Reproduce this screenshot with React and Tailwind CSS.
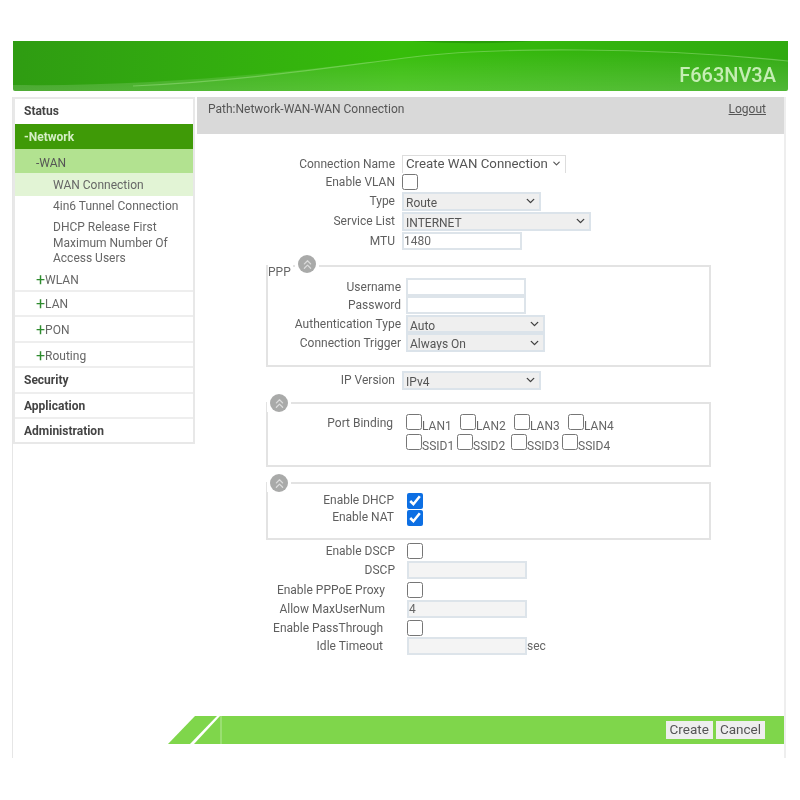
import { ChevronDown, ChevronsUp } from 'lucide-react';

const subItems = [
  { label: 'WLAN', row: 'h-[23px] border-b-2' },
  { label: 'LAN', row: 'h-[25px] border-b-2 pt-[1px]' },
  { label: 'PON', row: 'h-[26px] border-b-2 pt-[2px]' },
  { label: 'Routing', row: 'h-[25px] border-b-2 pt-[2px]' },
];

function Collapse({ className = 'left-[-1px] top-[-10px]' }) {
  return (
    <span className={`absolute bg-white px-[3px] ${className}`}>
      <span className="flex h-[18px] w-[18px] items-center justify-center rounded-full bg-[#a9aaa9]">
        <ChevronsUp className="h-[15px] w-[15px] text-[#dcdcdc]" strokeWidth={2} />
      </span>
    </span>
  );
}

function Select({ value, width }) {
  return (
    <div className={`relative ${width}`}>
      <select
        defaultValue={value}
        className="block h-full w-full appearance-none border-2 border-[#dbe3ea] bg-[#efefef] pl-[2px] text-[12px] text-[#555] outline-none"
      >
        <option>{value}</option>
      </select>
      <ChevronDown className="pointer-events-none absolute right-[4px] top-1/2 h-[13px] w-[13px] -translate-y-1/2 text-[#444]" strokeWidth={2.5} />
    </div>
  );
}

function Input({ value = '', disabled = false, className = 'h-[18px]' }) {
  return (
    <input
      type="text"
      defaultValue={value}
      disabled={disabled}
      className={`${className} w-[120px] border-2 border-[#dde4ea] text-[12px] text-[#666] outline-none ${disabled ? 'bg-[#f4f4f4]' : 'bg-white'}`}
    />
  );
}

function Check({ checked = false }) {
  return (
    <input
      type="checkbox"
      defaultChecked={checked}
      className="m-0 h-[16px] w-[16px] shrink-0 accent-[#0d6fe3]"
    />
  );
}

function Row({ label, labelClass, height, children }) {
  return (
    <div className={`flex items-center ${height}`}>
      <span className={`shrink-0 text-right text-[12px] leading-[14px] text-[#5f5f5f] ${labelClass}`}>{label}</span>
      {children}
    </div>
  );
}

function PortCheck({ label, className = '' }) {
  return (
    <label className={`flex h-[20px] items-start text-[12px] leading-[13px] text-[#666] ${className}`}>
      <Check />
      <span className="pt-[6px]">{label}</span>
    </label>
  );
}

export default function App() {
  return (
    <div className="h-[800px] w-[800px] overflow-hidden bg-white pl-[12px] pt-[41px] font-['Roboto','Liberation_Sans',sans-serif] blur-[0.4px]">
      {/* Banner */}
      <div className="relative ml-[1px] flex h-[50px] w-[775px] items-end justify-end overflow-hidden rounded-b-[2px] bg-gradient-to-r from-[#2f9c12] via-[#36bd0a] to-[#30aa10] pb-[6px] pr-[12px]">
        <svg className="absolute inset-0 h-full w-full" viewBox="0 0 775 50" preserveAspectRatio="none">
          <defs>
            <linearGradient id="glow" x1="0" y1="0" x2="0" y2="1">
              <stop offset="0" stopColor="#fff" stopOpacity="0" />
              <stop offset="1" stopColor="#fff" stopOpacity="0.16" />
            </linearGradient>
          </defs>
          <path d="M0 50 L0 44 C150 46 300 28 400 16 C480 6 640 6 775 20 L775 50 Z" fill="url(#glow)" />
          <path d="M120 45 C230 40 320 26 400 16 C480 6 640 6 775 20" fill="none" stroke="#a7e58d" strokeOpacity="0.45" strokeWidth="1.2" />
          <path d="M400 0 C440 3 480 3 520 0 Z" fill="#1f8a0a" fillOpacity="0.6" />
        </svg>
        <span className="relative text-[20px] font-medium leading-none text-[#c5eeb4]">F663NV3A</span>
      </div>

      <div className="mt-[6px] flex h-[661px] w-[774px] border-l border-[#e6e6e6]">
        {/* Sidebar */}
        <nav className="h-[347px] w-[182px] shrink-0 border-2 border-[#e8e8e8] bg-white text-[12px] text-[#666]">
          <div className="flex h-[25px] items-center pb-[2px] pl-[9px] font-bold text-[#444]">Status</div>
          <div className="flex h-[25px] items-center bg-[#3f9a07] pl-[9px] pt-[1px] font-bold text-[#d5efc5]">-Network</div>
          <div className="flex h-[24px] items-center bg-[#b2e290] pl-[21px] pt-[3px] text-[#555]">-WAN</div>
          <div className="flex h-[23px] items-center bg-[#e2f4d5] pl-[38px] pt-[1px]">WAN Connection</div>
          <div className="flex h-[20px] items-center pl-[38px]">4in6 Tunnel Connection</div>
          <div className="flex h-[21px] items-center pl-[38px]">DHCP Release First</div>
          <div className="mt-[-1px] pb-[3px] pl-[38px] leading-[15px]">
            Maximum Number Of
            <br />
            Access Users
          </div>
          {subItems.map((item) => (
            <div key={item.label} className={`flex items-center border-[#eeeeee] pl-[21px] ${item.row}`}>
              <span className="text-[16px] leading-none text-[#2e8b2e]">+</span>
              {item.label}
            </div>
          ))}
          <div className="flex h-[26px] items-center border-b-2 border-[#eeeeee] pl-[9px] font-bold text-[#444]">Security</div>
          <div className="flex h-[25px] items-center border-b-2 border-[#eeeeee] pl-[9px] font-bold text-[#444]">Application</div>
          <div className="flex h-[24px] items-center pl-[9px] font-bold text-[#444]">Administration</div>
        </nav>

        {/* Main */}
        <main className="ml-[2px] flex w-[589px] flex-col border-r-2 border-[#eeeeee]">
          <div className="flex h-[37px] justify-between bg-[#d9d9d9] pl-[11px] pr-[18px] pt-[3px] text-[12px] text-[#555]">
            <span>Path:Network-WAN-WAN Connection</span>
            <span className="underline">Logout</span>
          </div>

          <div className="pt-[20px]">
            <Row label="Connection Name" labelClass="w-[198px] mr-[7px]" height="h-[19px]">
              <div className="flex h-[18px] w-[164px] items-center justify-between whitespace-nowrap border border-b-0 border-[#dddddd] pb-[1px] pl-[3px] pr-[3px] text-[13.25px] text-[#555]">
                Create WAN Connection
                <ChevronDown className="h-[11px] w-[11px]" strokeWidth={2.5} />
              </div>
            </Row>
            <Row label="Enable VLAN" labelClass="w-[198px] mr-[7px]" height="h-[18px]">
              <Check />
            </Row>
            <Row label="Type" labelClass="w-[198px] mr-[7px]" height="h-[20px]">
              <Select value="Route" width="h-[19px] w-[139px]" />
            </Row>
            <Row label="Service List" labelClass="w-[198px] mr-[7px]" height="h-[20px]">
              <Select value="INTERNET" width="h-[19px] w-[189px]" />
            </Row>
            <Row label="MTU" labelClass="w-[198px] mr-[7px]" height="h-[20px]">
              <Input value="1480" />
            </Row>

            {/* PPP */}
            <fieldset className="relative ml-[69px] mt-[14px] h-[102px] w-[445px] border-2 border-[#e3e3e3] pt-[10px]">
              <span className="absolute left-[0px] top-[-2px] bg-white pr-[2px] text-[12px] leading-[14px] text-[#666]">PPP</span>
              <Collapse className="left-[27px] top-[-12px]" />
              <Row label="Username" labelClass="w-[133px] mr-[5px]" height="h-[19px]">
                <Input />
              </Row>
              <Row label="Password" labelClass="w-[133px] mr-[5px]" height="h-[18px]">
                <Input />
              </Row>
              <Row label="Authentication Type" labelClass="w-[133px] mr-[5px]" height="h-[19px]">
                <Select value="Auto" width="h-[18px] w-[139px]" />
              </Row>
              <Row label="Connection Trigger" labelClass="w-[133px] mr-[5px]" height="h-[19px]">
                <Select value="Always On" width="h-[19px] w-[139px]" />
              </Row>
            </fieldset>

            <div className="mt-[3px]">
              <Row label="IP Version" labelClass="w-[198px] mr-[7px]" height="h-[20px]">
                <Select value="IPv4" width="h-[19px] w-[139px]" />
              </Row>
            </div>

            {/* Port binding */}
            <fieldset className="relative ml-[69px] mt-[12px] h-[65px] w-[445px] border-2 border-[#e3e3e3] pt-[10px]">
              <Collapse />
              <div className="flex">
                <span className="w-[125px] pt-[2px] text-right text-[12px] leading-[14px] text-[#5f5f5f]">Port Binding</span>
                <div className="ml-[13px]">
                  <div className="flex">
                    <PortCheck label="LAN1" className="w-[54px]" />
                    <PortCheck label="LAN2" className="w-[54px]" />
                    <PortCheck label="LAN3" className="w-[54px]" />
                    <PortCheck label="LAN4" className="w-[54px]" />
                  </div>
                  <div className="flex">
                    <PortCheck label="SSID1" className="w-[51px]" />
                    <PortCheck label="SSID2" className="w-[54px]" />
                    <PortCheck label="SSID3" className="w-[51px]" />
                    <PortCheck label="SSID4" className="w-[54px]" />
                  </div>
                </div>
              </div>
            </fieldset>

            {/* DHCP / NAT */}
            <fieldset className="relative ml-[69px] mt-[15px] h-[58px] w-[445px] border-2 border-[#e3e3e3] pt-[8px]">
              <Collapse />
              <Row label="Enable DHCP" labelClass="w-[126px] mr-[13px] pb-[1px]" height="h-[17px]">
                <Check checked />
              </Row>
              <Row label="Enable NAT" labelClass="w-[126px] mr-[13px] pb-[1px]" height="h-[17px]">
                <Check checked />
              </Row>
            </fieldset>

            <div className="pt-[2px]">
              <Row label="Enable DSCP" labelClass="w-[198px] mr-[12px]" height="h-[18px]">
                <Check />
              </Row>
              <Row label="DSCP" labelClass="w-[198px] mr-[12px]" height="h-[20px]">
                <Input disabled />
              </Row>
              <Row label="Enable PPPoE Proxy" labelClass="w-[188px] mr-[22px]" height="h-[20px]">
                <Check />
              </Row>
              <Row label="Allow MaxUserNum" labelClass="w-[188px] mr-[22px]" height="h-[18px]">
                <Input value="4" disabled />
              </Row>
              <Row label="Enable PassThrough" labelClass="w-[186px] mr-[24px]" height="h-[19px]">
                <Check />
              </Row>
              <Row label="Idle Timeout" labelClass="w-[186px] mr-[24px]" height="h-[18px]">
                <Input disabled />
                <span className="text-[12px] text-[#666]">sec</span>
              </Row>
            </div>
          </div>

          {/* Footer band */}
          <div className="relative ml-[-29px] mt-[61px] flex h-[28px] items-center justify-end bg-[#7fd64b] pr-[19px]">
            <svg className="absolute left-0 top-0 h-[28px] w-[54px]" viewBox="0 0 54 28">
              <rect width="54" height="28" fill="#fff" />
              <polygon points="0,28 22,28 49,0 27,0" fill="#7fd64b" />
              <polygon points="26,28 54,28 54,0 52,0" fill="#7fd64b" />
              <line x1="53" y1="0" x2="53" y2="28" stroke="#b6e89a" strokeWidth="1" />
            </svg>
            <button className="relative h-[18px] bg-[#eeeeee] px-[4px] text-[13.5px] leading-none text-[#555]">Create</button>
            <button className="relative ml-[3px] h-[18px] bg-[#eeeeee] px-[4px] text-[13.5px] leading-none text-[#555]">Cancel</button>
          </div>
        </main>
      </div>
    </div>
  );
}
